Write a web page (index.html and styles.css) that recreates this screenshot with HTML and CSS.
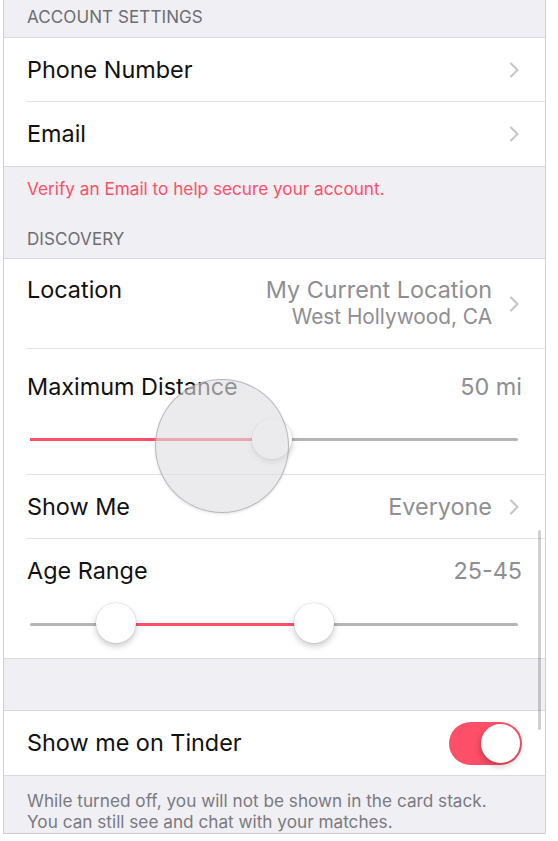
FILE: index.html
```html
<!DOCTYPE html>
<html>
<head>
<meta charset="utf-8">
<link rel="stylesheet" href="styles.css">
</head>
<body>
<div class="screen">
  <div class="section-header first">ACCOUNT SETTINGS</div>
  <div class="group">
    <div class="row">
      <span class="label">Phone Number</span>
      <span class="accessory"><svg class="chevron" width="11" height="16" viewBox="0 0 11 16"><path d="M2 1.5 L8.5 8 L2 14.5" fill="none" stroke="#c7c7cc" stroke-width="2.2" stroke-linecap="round" stroke-linejoin="round"/></svg></span>
    </div>
    <div class="row last">
      <span class="label">Email</span>
      <span class="accessory"><svg class="chevron" width="11" height="16" viewBox="0 0 11 16"><path d="M2 1.5 L8.5 8 L2 14.5" fill="none" stroke="#c7c7cc" stroke-width="2.2" stroke-linecap="round" stroke-linejoin="round"/></svg></span>
    </div>
  </div>
  <div class="section-footer warn">Verify an Email to help secure your account.</div>
  <div class="section-header">DISCOVERY</div>
  <div class="group">
    <div class="row location">
      <span class="label">Location</span>
      <span class="accessory">
        <span class="value-stack">
          <span class="value">My Current Location</span>
          <span class="value sub">West Hollywood, CA</span>
        </span>
        <svg class="chevron" width="11" height="16" viewBox="0 0 11 16"><path d="M2 1.5 L8.5 8 L2 14.5" fill="none" stroke="#c7c7cc" stroke-width="2.2" stroke-linecap="round" stroke-linejoin="round"/></svg>
      </span>
    </div>
    <div class="row slider-row distance">
      <div class="slider-head">
        <span class="label">Maximum Distance</span>
        <span class="value">50 mi</span>
      </div>
      <div class="slider">
        <div class="track"></div>
        <div class="fill" style="left:0px;width:242px"></div>
        <div class="thumb" style="left:222px"></div>
        <div class="magnifier"></div>
      </div>
    </div>
    <div class="row">
      <span class="label">Show Me</span>
      <span class="accessory">
        <span class="value">Everyone</span>
        <svg class="chevron" width="11" height="16" viewBox="0 0 11 16"><path d="M2 1.5 L8.5 8 L2 14.5" fill="none" stroke="#c7c7cc" stroke-width="2.2" stroke-linecap="round" stroke-linejoin="round"/></svg>
      </span>
    </div>
    <div class="row slider-row age last">
      <div class="slider-head">
        <span class="label">Age Range</span>
        <span class="value">25-45</span>
      </div>
      <div class="slider">
        <div class="track"></div>
        <div class="fill" style="left:86px;width:198px"></div>
        <div class="thumb" style="left:66px"></div>
        <div class="thumb" style="left:264px"></div>
      </div>
    </div>
  </div>
  <div class="spacer"></div>
  <div class="group">
    <div class="row toggle-row last">
      <span class="label">Show me on Tinder</span>
      <span class="switch on"><span class="knob"></span></span>
    </div>
  </div>
  <div class="section-footer note">While turned off, you will not be shown in the card stack.<br>You can still see and chat with your matches.</div>
  <div class="scrollbar"></div>
</div>
</body>
</html>
```

FILE: styles.css
```css
* {
  box-sizing: border-box;
}

html, body {
  margin: 0;
  padding: 0;
  background: #ffffff;
}

body {
  font-family: "Inter", "Noto Sans", sans-serif;
  color: #111111;
}

.screen {
  position: relative;
  margin-left: 3px;
  width: 543px;
  background: #efeff4;
  border-left: 1px solid #cfcfd3;
  border-right: 1px solid #cfcfd3;
  border-bottom: 1px solid #cfcfd3;
  overflow: hidden;
}

.section-header {
  padding: 28px 23px 8px 23px;
  font-size: 17px;
  line-height: 22px;
  color: #6d6d72;
  letter-spacing: 0.1px;
}

.section-header.first {
  padding-top: 6px;
  padding-bottom: 9px;
}

.group {
  background: #ffffff;
  border-top: 1px solid #d9d9de;
  border-bottom: 1px solid #d9d9de;
}

.row {
  display: flex;
  align-items: center;
  justify-content: space-between;
  margin-left: 22px;
  padding-right: 23px;
  height: 64px;
  border-bottom: 1px solid #e3e3e7;
}

.row.last {
  border-bottom: none;
  height: 64px;
}

.label {
  font-size: 23.4px;
  line-height: 26px;
  color: #111111;
  padding-left: 1px;
}

.value {
  font-size: 23.4px;
  line-height: 26px;
  color: #8e8e93;
}

.accessory {
  display: flex;
  align-items: center;
}

.chevron {
  display: block;
  margin-left: 17px;
  margin-right: 2px;
}

.row.location {
  height: 90px;
  align-items: flex-start;
  padding-top: 18px;
}

.value-stack {
  display: flex;
  flex-direction: column;
  align-items: flex-end;
}

.value.sub {
  font-size: 20.8px;
  line-height: 28px;
}

.row.location .accessory {
  align-self: flex-start;
}

.slider-row {
  flex-direction: column;
  align-items: stretch;
  justify-content: flex-start;
  height: auto;
}

.slider-head {
  display: flex;
  justify-content: space-between;
  align-items: center;
}

.row.distance {
  height: 126px;
  padding-top: 25px;
}

.row.age.last {
  height: 119px;
  padding-top: 19px;
}

.slider {
  position: relative;
  height: 40px;
  margin: 19px 4px 0 4px;
}

.row.age .slider {
  margin-top: 20px;
}

.track {
  position: absolute;
  left: 0;
  right: 0;
  top: 19px;
  height: 2.5px;
  border-radius: 2px;
  background: #b5b5b8;
}

.fill {
  position: absolute;
  top: 19px;
  height: 2.5px;
  background: #fd5068;
}

.thumb {
  position: absolute;
  top: 0;
  width: 40px;
  height: 40px;
  border-radius: 50%;
  background: #ffffff;
  box-shadow: 0 3px 6px rgba(0, 0, 0, 0.22), 0 0 0 0.5px rgba(0, 0, 0, 0.12);
}

.row.age .thumb {
  top: -1px;
}

.magnifier {
  position: absolute;
  left: 125px;
  top: -40px;
  width: 134px;
  height: 134px;
  border-radius: 50%;
  background: rgba(222, 222, 226, 0.62);
  border: 1.5px solid rgba(140, 140, 145, 0.55);
  box-shadow: 0 1px 3px rgba(0, 0, 0, 0.12);
}

.spacer {
  height: 51px;
}

.toggle-row {
  height: 63px;
}

.switch {
  position: relative;
  display: block;
  width: 73px;
  height: 43px;
  border-radius: 22px;
  background: #fd5068;
}

.knob {
  position: absolute;
  right: 2px;
  top: 2px;
  width: 39px;
  height: 39px;
  border-radius: 50%;
  background: #ffffff;
  box-shadow: -1px 3px 6px rgba(0, 0, 0, 0.25);
}

.section-footer {
  padding: 11px 23px 0 23px;
  font-size: 17.2px;
  line-height: 22px;
  color: #6d6d72;
}

.section-footer.warn {
  color: #fd5068;
}

.section-footer.note {
  padding-top: 14px;
  line-height: 21px;
  height: 57px;
  color: #7a7a7f;
}

.scrollbar {
  position: absolute;
  left: 534px;
  top: 530px;
  width: 3px;
  height: 200px;
  border-radius: 2px;
  background: rgba(0, 0, 0, 0.18);
}
```
